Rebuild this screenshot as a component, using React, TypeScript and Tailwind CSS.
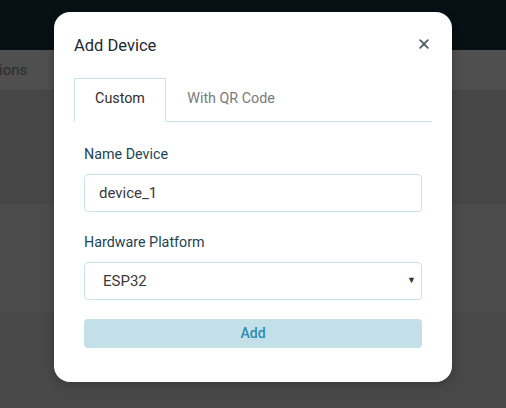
import { useState } from "react";

const PLATFORMS = ["ESP32", "ESP8266", "Arduino", "Raspberry Pi"];

function CloseIcon() {
  return (
    <svg width="10" height="10" viewBox="0 0 10 10" fill="none">
      <path d="M1.2 1.2L8.8 8.8M8.8 1.2L1.2 8.8" stroke="#525e63" strokeWidth="1.8" strokeLinecap="round" />
    </svg>
  );
}

export default function App() {
  const [tab, setTab] = useState<"custom" | "qr">("custom");
  const [name, setName] = useState("device_1");
  const [platform, setPlatform] = useState("ESP32");

  return (
    <div className="relative h-[408px] w-[506px] overflow-hidden font-['Roboto',sans-serif]">
      {/* page behind the dialog, already dimmed */}
      <div className="flex h-full flex-col bg-[#484848]">
        <div className="h-[50px] bg-[#071014]" />
        <div className="flex h-[41px] items-center border-b border-[#444] bg-[#4f4f4f] text-[15px] text-[#2c2c2c]">
          <span className="-ml-[1px]">ions</span>
        </div>
        <div className="h-[113px] border-b border-[#454545] bg-[#474747]" />
        <div className="h-[109px] border-b border-[#454545] bg-[#4b4b4b]" />
        <div className="flex-1 bg-[#484848]" />
      </div>

      <div className="absolute inset-0 flex justify-center pt-3">
        <div className="h-[370px] w-[398px] rounded-2xl bg-white px-5 pt-[25px] shadow-[0_2px_10px_rgba(0,0,0,0.25)]">
          <div className="flex items-center justify-between">
            <h2 className="text-[16.5px] leading-[18px] text-[#1b2a33]">Add Device</h2>
            <button className="-mt-[5px] mr-[1px] flex h-[18px] w-[14px] items-center justify-center">
              <CloseIcon />
            </button>
          </div>

          <div className="mt-[23px] flex border-b border-[#c5e2ea]">
            <button
              onClick={() => setTab("custom")}
              className={
                tab === "custom"
                  ? "-mb-px h-[44px] w-[92px] border border-b-white border-[#c5e2ea] bg-white pb-0.5 text-[14.3px] text-[#2e2e2e]"
                  : "-mb-px h-[44px] w-[92px] border border-transparent pb-0.5 text-[14.3px] text-[#7a7a7a]"
              }
            >
              Custom
            </button>
            <button
              onClick={() => setTab("qr")}
              className={
                tab === "qr"
                  ? "-mb-px h-[44px] w-[130px] border border-b-white border-[#c5e2ea] bg-white pb-0.5 text-[14.3px] text-[#2e2e2e]"
                  : "-mb-px h-[44px] w-[130px] border border-transparent pb-0.5 text-[14.3px] text-[#7a7a7a]"
              }
            >
              With QR Code
            </button>
          </div>

          <div className="px-2.5 pt-[22px]">
            <label className="block text-[14.3px] leading-5 text-[#1d4553]">Name Device</label>
            <input
              value={name}
              onChange={(e) => setName(e.target.value)}
              className="mt-2.5 h-[38px] w-full rounded border border-[#c5e2ea] px-[14px] text-[15px] text-[#3a3a3a] outline-none"
            />

            <label className="mt-5 block text-[14.3px] leading-5 text-[#1d4553]">Hardware Platform</label>
            <div className="relative mt-2.5">
              <select
                value={platform}
                onChange={(e) => setPlatform(e.target.value)}
                className="h-[38px] w-full appearance-none rounded border border-[#c5e2ea] bg-white px-[18px] text-[15px] text-[#3a3a3a] outline-none"
              >
                {PLATFORMS.map((p) => (
                  <option key={p} value={p}>
                    {p}
                  </option>
                ))}
              </select>
              <span className="pointer-events-none absolute right-[6px] top-1/2 -translate-y-1/2 text-[9px] text-[#333]">
                ▼
              </span>
            </div>

            <button className="mt-[19px] h-[29px] w-full rounded bg-[#c3e0e8] text-[14px] font-medium text-[#2b8db3]">
              Add
            </button>
          </div>
        </div>
      </div>
    </div>
  );
}
